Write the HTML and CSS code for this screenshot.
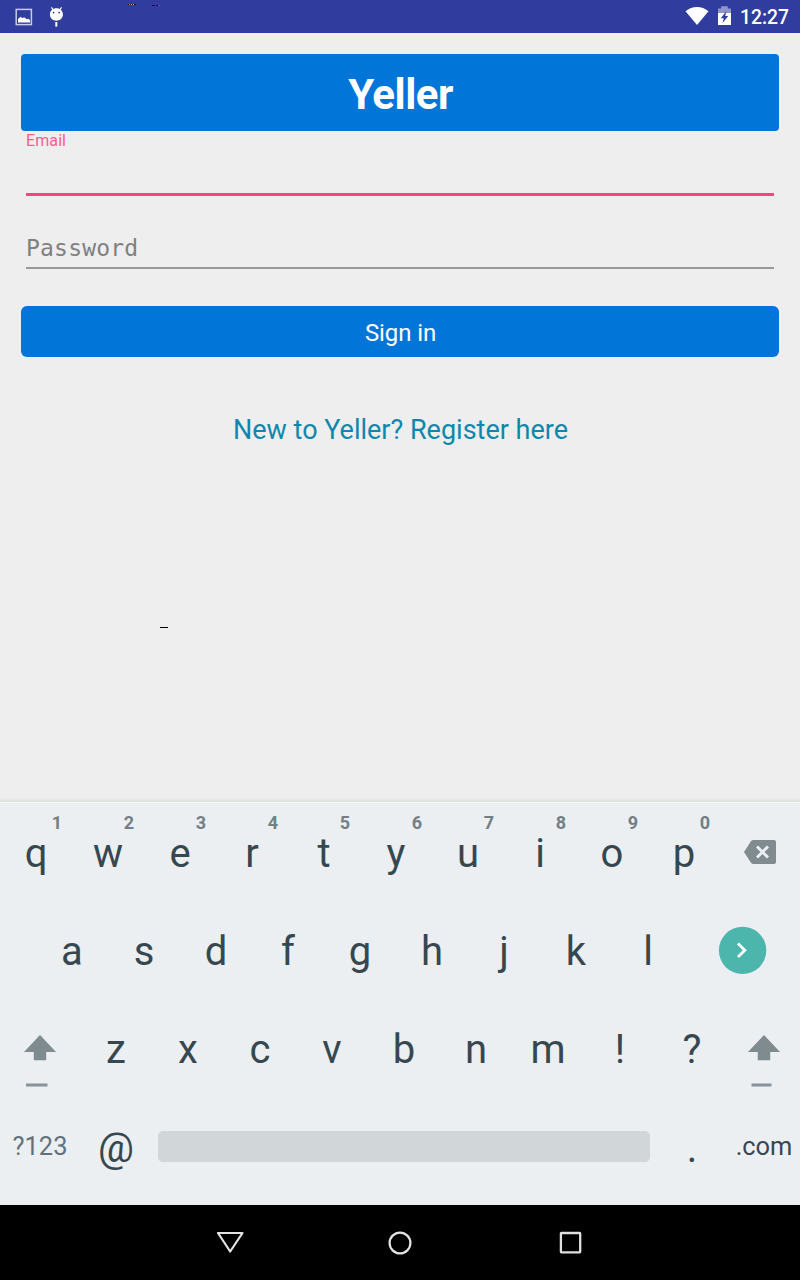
FILE: index.html
```html
<!DOCTYPE html>
<html lang="en">
<head>
<meta charset="utf-8">
<title>Yeller</title>
<link rel="stylesheet" href="styles.css">
</head>
<body>
<div class="screen">
  <header class="status">
    <svg class="status-left" width="170" height="33" viewBox="0 0 170 33">
      <rect x="16.2" y="9.4" width="15.200" height="15.200" fill="none" stroke="#c6cae6" stroke-width="1.500"/>
      <path d="M18 22.500v-3.500l2.500-2.300 2 1.500 1.500-1 3 2 1.500-.5 1.500 1.500v2.300z" fill="#fff"/>
      <path d="M53.600 10.500 51.400 7.400M59.200 10.500 61.600 7.400" stroke="#fff" stroke-width="1.200"/>
      <path d="M56.400 8.300c3.900 0 6.500 2.700 6.500 6.200s-2.900 6.200-6.500 6.200-6.500-2.700-6.500-6.200 2.600-6.200 6.500-6.200z" fill="#fff"/>
      <circle cx="53.600" cy="12.600" r=".9" fill="#303c9c"/><circle cx="59.200" cy="12.600" r=".9" fill="#303c9c"/>
      <path d="M56.300 22v4.600" stroke="#fff" stroke-width="2"/>
      <path d="M128 4.500h8" stroke="#111"/><path d="M129 4.500h6" stroke="#e0b020" stroke-dasharray="1 1"/>
      <path d="M152 5.500h3M156 5.500h2" stroke="#111"/><path d="M155 5.500h1M158 5.500h2" stroke="#555a70"/>
    </svg>
    <div class="status-right">
      <svg width="48" height="33" viewBox="684 0 48 33">
        <path d="M685.500 11.200C692 5.500 702 5.500 708.500 11.200L697 25z" fill="#fff"/>
        <path d="M718 13V8.500h3.200V6.300h6.600v2.200h3.200V13z" fill="#8f95cb"/>
        <path d="M718 13h13v12h-13z" fill="#fff"/>
        <path d="M726.500 11 720.800 18.200h3L722.500 23l5.700-7h-3z" fill="#303c9c"/>
      </svg>
      <span class="clock">12:27</span>
    </div>
  </header>

  <main class="content">
    <h1 class="brand">Yeller</h1>
    <div class="field field-email"><label class="float-label">Email</label></div>
    <div class="field field-password"><span class="hint">Password</span></div>
    <button class="sign-in">Sign in</button>
    <a class="register">New to Yeller? Register here</a>
    <i class="caret"></i>
  </main>

  <section class="keyboard">
    <div class="row">
      <span class="key">q<b class="alt">1</b></span><span class="key">w<b class="alt">2</b></span><span class="key">e<b class="alt">3</b></span><span class="key">r<b class="alt">4</b></span><span class="key">t<b class="alt">5</b></span><span class="key">y<b class="alt">6</b></span><span class="key">u<b class="alt">7</b></span><span class="key">i<b class="alt">8</b></span><span class="key">o<b class="alt">9</b></span><span class="key">p<b class="alt">0</b></span>
      <span class="key icon grow"><svg width="80" height="98" viewBox="720 804 80 98">
        <path d="M744 852l7-10.800q1-1.200 2.400-1.200H774q2 0 2 2v20q0 2-2 2h-20.600q-1.400 0-2.400-1.200z" fill="#7f8b8f"/>
        <path d="M757 846.500l11 11M768 846.500l-11 11" stroke="#ebeff2" stroke-width="3"/>
      </svg></span>
    </div>
    <div class="row row-indent">
      <span class="key">a</span><span class="key">s</span><span class="key">d</span><span class="key">f</span><span class="key">g</span><span class="key">h</span><span class="key">j</span><span class="key">k</span><span class="key">l</span>
      <span class="key icon grow"><svg width="116" height="98" viewBox="684 902 116 98">
        <circle cx="742.600" cy="950.400" r="23.700" fill="#4db6ac"/>
        <path d="M738 943.500l6.800 6.800-6.800 6.800" fill="none" stroke="#fff" stroke-width="2.800"/>
      </svg></span>
    </div>
    <div class="row">
      <span class="key icon wide"><svg width="80" height="98" viewBox="0 1000 80 98">
        <path d="M40 1035l16 17h-9.800v8.200H33.800V1052H24z" fill="#7f8b8f"/>
        <path d="M26 1085h21.500" stroke="#87939a" stroke-width="3"/>
      </svg></span>
      <span class="key">z</span><span class="key">x</span><span class="key">c</span><span class="key">v</span><span class="key">b</span><span class="key">n</span><span class="key">m</span><span class="key">!</span><span class="key">?</span>
      <span class="key icon"><svg width="72" height="98" viewBox="728 1000 72 98">
        <path d="M764 1035l16 17h-9.800v8.200h-12.400V1052H748z" fill="#7f8b8f"/>
        <path d="M751.500 1085h20" stroke="#87939a" stroke-width="3"/>
      </svg></span>
    </div>
    <div class="row">
      <span class="key wide small muted">?123</span><span class="key low">@</span><span class="key space"></span><span class="key low">.</span><span class="key small">.com</span>
    </div>
  </section>

  <nav class="nav">
    <svg width="28" height="28" viewBox="216 1229 28 28"><path d="M218 1233h24.500l-12.300 18.500z" fill="none" stroke="#e4e4e4" stroke-width="2.200" stroke-linejoin="round"/></svg>
    <svg width="28" height="28" viewBox="386 1229 28 28"><circle cx="400" cy="1243" r="10.400" fill="none" stroke="#e4e4e4" stroke-width="2.200"/></svg>
    <svg width="28" height="28" viewBox="556 1229 28 28"><rect x="560.900" y="1233" width="19.300" height="19.300" rx=".5" fill="none" stroke="#e0e0e0" stroke-width="2.300"/></svg>
  </nav>
</div>
</body>
</html>
```
FILE: styles.css
```css
* { box-sizing: border-box; }
body { margin: 0; font-family: Roboto, "Liberation Sans", sans-serif; }
svg { display: block; flex: none; }
.screen { width: 800px; height: 1280px; display: flex; flex-direction: column; background: #eee; overflow: hidden; }

.status { height: 33px; flex: none; display: flex; justify-content: space-between; background: #303c9e; color: #fff; }
.status-right { display: flex; padding-right: 11px; gap: 8px; }
.clock { width: 49px; font-size: 19.300px; font-weight: 500; line-height: 36px; }

.content { height: 770px; flex: none; display: flex; flex-direction: column; padding: 21px 21px 0; background: linear-gradient(#eee calc(100% - 5px), #dcdedf calc(100% - 1px), #f8fafa calc(100% - 1px)); }
.brand { margin: 0; height: 77px; border-radius: 4px; background: #0275d8; color: #fff; font-size: 42px; letter-spacing: -.5px; line-height: 82px; font-weight: 700; text-align: center; padding-left: 1px; }
.field { margin: 0 5px; }
.field-email { height: 65px; border-bottom: 3px solid #ff4081; }
.float-label { display: block; font-size: 16px; letter-spacing: .1px; line-height: 19px; color: #ff5a92; }
.field-password { height: 73px; padding-top: 36px; border-bottom: 2px solid #999; }
.hint { display: block; font-family: "DejaVu Sans Mono", monospace; font-size: 23px; letter-spacing: .2px; line-height: 32px; color: #808080; }
.sign-in { margin: 37px 0 0; padding: 3px 0 0 1px; border: 0; height: 51px; border-radius: 6px; background: #0275d8; color: #fff; font: 24px/48px Roboto, sans-serif; letter-spacing: -.1px; text-align: center; }
.register { margin-top: 57px; padding-left: 1px; font-size: 27px; line-height: 32px; text-align: center; color: #0f87ad; }
.caret { width: 8px; height: 1px; margin: 181px 0 0 139px; background: #000; }

.keyboard { height: 402px; flex: none; padding-top: 1px; background: #ebeff2; color: #37474f; }
.row { display: flex; height: 98px; }
.row-indent { padding-left: 36px; }
.key { position: relative; width: 72px; flex: none; display: flex; align-items: center; justify-content: center; font-size: 40px; line-height: 96px; padding-top: 2px; }
.key.icon { padding-top: 0; }
.key.grow { flex: 1; }
.key.low { padding-top: 4px; }
.key.wide { width: 80px; }
.key.small { font-size: 25.400px; padding: 0 0 2px; }
.muted { color: #62717a; }
.alt { position: absolute; left: 47px; top: 8px; width: 20px; text-align: center; font-size: 18px; line-height: 22px; color: #737f85; }
.key.space { width: 504px; padding: 0 0 1px; }
.space::before { content: ""; width: 492px; height: 31px; border-radius: 5px; background: #d1d6d9; }

.nav { flex: 1; display: flex; justify-content: center; align-items: center; gap: 142px; background: #000; }
```
